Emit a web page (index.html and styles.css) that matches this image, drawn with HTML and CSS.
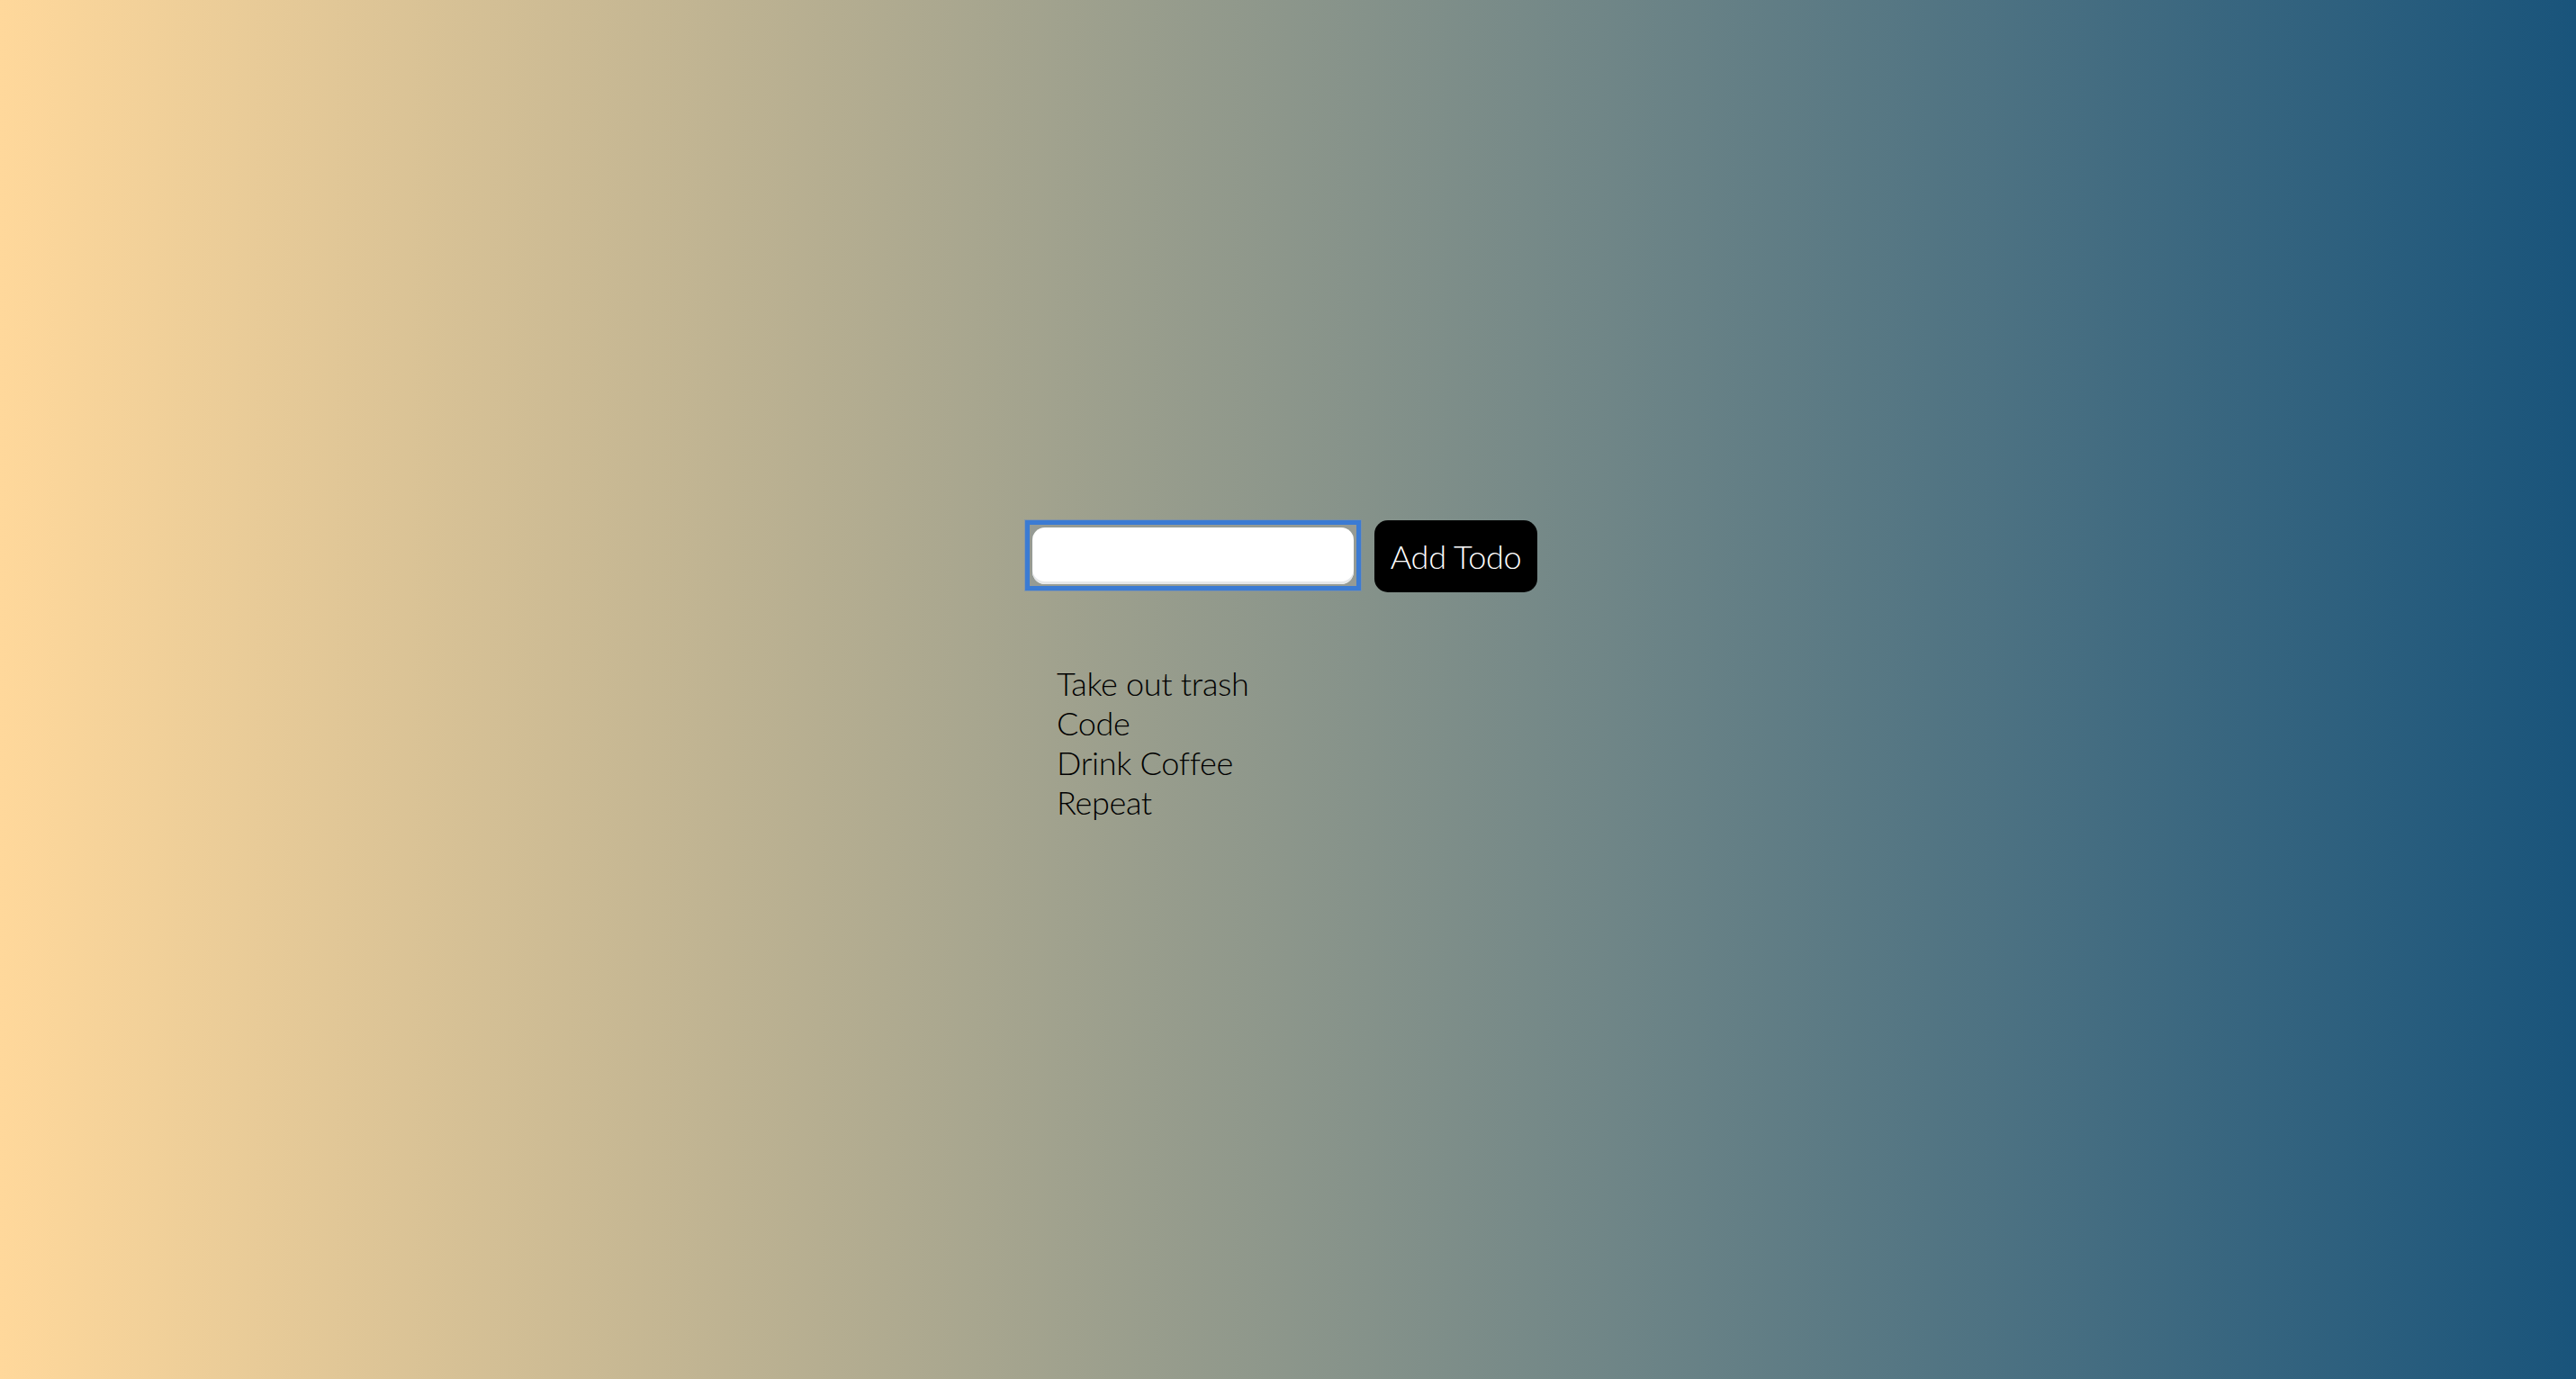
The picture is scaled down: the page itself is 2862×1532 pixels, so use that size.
FILE: index.html
```html
<!DOCTYPE html>
<html lang="en">
<head>
<meta charset="utf-8">
<title>Todo</title>
<link rel="stylesheet" href="styles.css">
</head>
<body>
<main class="app">
  <form class="todo-form">
    <div class="field">
      <input class="todo-input" type="text" aria-label="New todo">
    </div>
    <button class="add-btn" type="button">Add Todo</button>
  </form>
  <ul class="todo-list">
    <li class="todo-item">Take out trash</li>
    <li class="todo-item">Code</li>
    <li class="todo-item">Drink Coffee</li>
    <li class="todo-item">Repeat</li>
  </ul>
</main>
</body>
</html>
```

FILE: styles.css
```css
html, body {
  margin: 0;
  padding: 0;
  height: 100%;
}

body {
  background: linear-gradient(to right, #ffd89b, #19547b);
  font-family: "Lato", "Liberation Sans", sans-serif;
  font-weight: 300;
  color: #000;
  overflow: hidden;
}

.app {
  width: 584px;
  margin: 0 auto;
  padding-top: 578px;
}

.todo-form {
  display: flex;
  align-items: flex-start;
  gap: 15px;
  margin: 0;
}

.field {
  box-sizing: border-box;
  width: 373px;
  height: 78px;
  border: 5px solid #3b7bd3;
  background: #969b94;
  padding: 3px 3px 2px 3px;
  box-shadow: 0 0 0 1px rgba(110, 140, 190, 0.55);
  display: flex;
}

.todo-input {
  box-sizing: border-box;
  width: 100%;
  height: 100%;
  margin: 0;
  border: none;
  border-radius: 14px;
  background: #fff;
  box-shadow: inset 0 -3px 0 #e6e8ea;
  outline: none;
  font-family: inherit;
  font-size: 36px;
  padding: 0 12px;
}

.add-btn {
  box-sizing: border-box;
  height: 80px;
  width: 181px;
  margin: 0;
  padding: 0;
  border: none;
  border-radius: 15px;
  background: #000;
  color: #fff;
  font-family: "Lato", "Liberation Sans", sans-serif;
  font-weight: 300;
  font-size: 36px;
  letter-spacing: -0.3px;
  white-space: nowrap;
  line-height: 1;
  display: flex;
  align-items: center;
  justify-content: center;
  cursor: pointer;
}

.todo-list {
  list-style: none;
  margin: 79px 0 0 0;
  padding: 0 0 0 35px;
}

.todo-item {
  font-size: 36px;
  line-height: 44px;
  letter-spacing: -0.3px;
}
```
